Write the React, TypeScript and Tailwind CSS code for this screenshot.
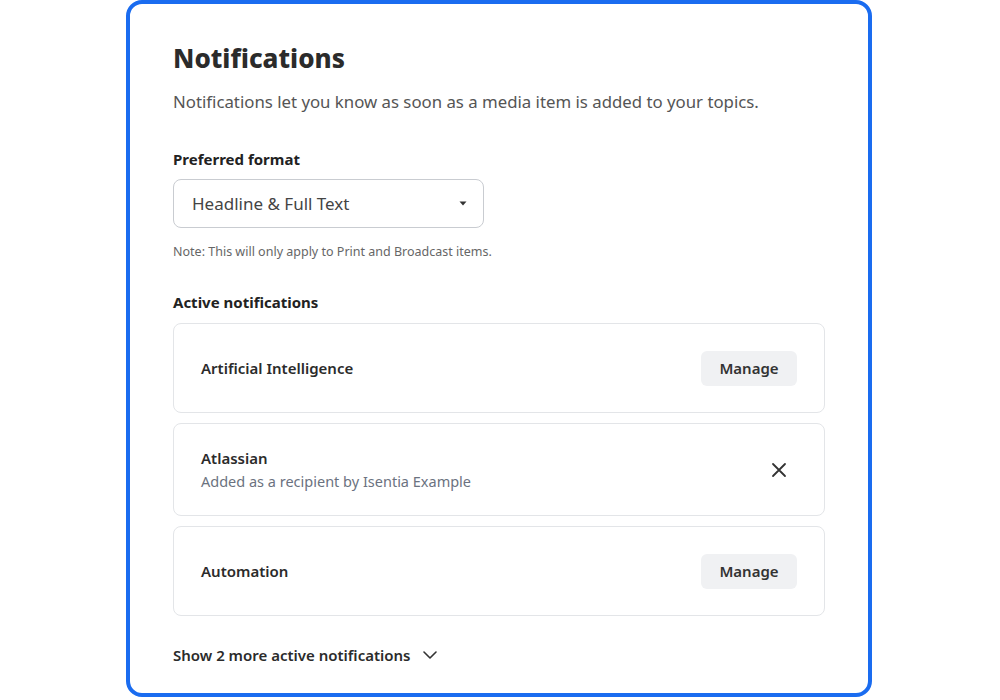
import React from "react";

const font = { fontFamily: '"Noto Sans", "Open Sans", sans-serif' };

function ManageButton() {
  return (
    <button className="h-[35px] w-[96px] rounded-[6px] bg-[#f0f1f3] text-[15px] font-semibold text-[#333]">
      Manage
    </button>
  );
}

function TopicCard({ title, children }: { title: string; children: React.ReactNode }) {
  return (
    <div className="flex h-[90px] items-center justify-between rounded-[8px] border border-[#e3e5e8] pl-[27px] pr-[27px]">
      <span className="text-[15px] font-semibold text-[#2b2b2b]">{title}</span>
      {children}
    </div>
  );
}

export default function App() {
  return (
    <div className="flex h-[700px] w-[1000px] bg-white" style={font}>
      <div className="mb-[3px] ml-[126px] flex w-[746px] flex-col rounded-[16px] border-4 border-[#1a6cf0] px-[43px] pt-[36px]">
        <h1 className="text-[26px] font-extrabold leading-[36px] text-[#2b2b2b]">Notifications</h1>
        <p className="mt-[14px] text-[16.8px] leading-[24px] text-[#555]">
          Notifications let you know as soon as a media item is added to your topics.
        </p>

        <h2 className="mt-[35px] text-[15px] font-bold leading-[20px] text-[#222]">Preferred format</h2>
        <div className="mt-[10px] flex h-[49px] w-[311px] items-center justify-between rounded-[8px] border border-[#c9ccd1] pl-[18px] pr-[16px]">
          <span className="text-[17px] text-[#444]">Headline &amp; Full Text</span>
          <svg width="8" height="5" viewBox="0 0 8 5">
            <path d="M0.5 0.5 L7.5 0.5 L4 4.5 Z" fill="#333" />
          </svg>
        </div>
        <p className="mt-[16px] text-[12.5px] leading-[16px] text-[#666]">
          Note: This will only apply to Print and Broadcast items.
        </p>

        <h2 className="mt-[32px] text-[15px] font-bold leading-[20px] text-[#222]">Active notifications</h2>
        <div className="mt-[11px] flex flex-col gap-[10px]">
          <TopicCard title="Artificial Intelligence">
            <ManageButton />
          </TopicCard>
          <div className="flex h-[93px] items-center justify-between rounded-[8px] border border-[#e3e5e8] pl-[27px] pr-[37px]">
            <div className="flex flex-col">
              <span className="text-[15px] font-semibold leading-[22px] text-[#2b2b2b]">Atlassian</span>
              <span className="text-[14.5px] leading-[24px] text-[#6b7280]">
                Added as a recipient by Isentia Example
              </span>
            </div>
            <svg width="16" height="16" viewBox="0 0 16 16" fill="none" stroke="#333" strokeWidth="1.8" strokeLinecap="round">
              <path d="M2 2 L14 14 M14 2 L2 14" />
            </svg>
          </div>
          <TopicCard title="Automation">
            <ManageButton />
          </TopicCard>
        </div>

        <button className="mt-[28px] flex items-center gap-[12px] self-start text-[15px] font-semibold text-[#2b2b2b]">
          Show 2 more active notifications
          <svg width="14" height="8" viewBox="0 0 14 8" fill="none" stroke="#333" strokeWidth="1.6" strokeLinecap="round" strokeLinejoin="round">
            <path d="M1 1 L7 7 L13 1" />
          </svg>
        </button>
      </div>
    </div>
  );
}
